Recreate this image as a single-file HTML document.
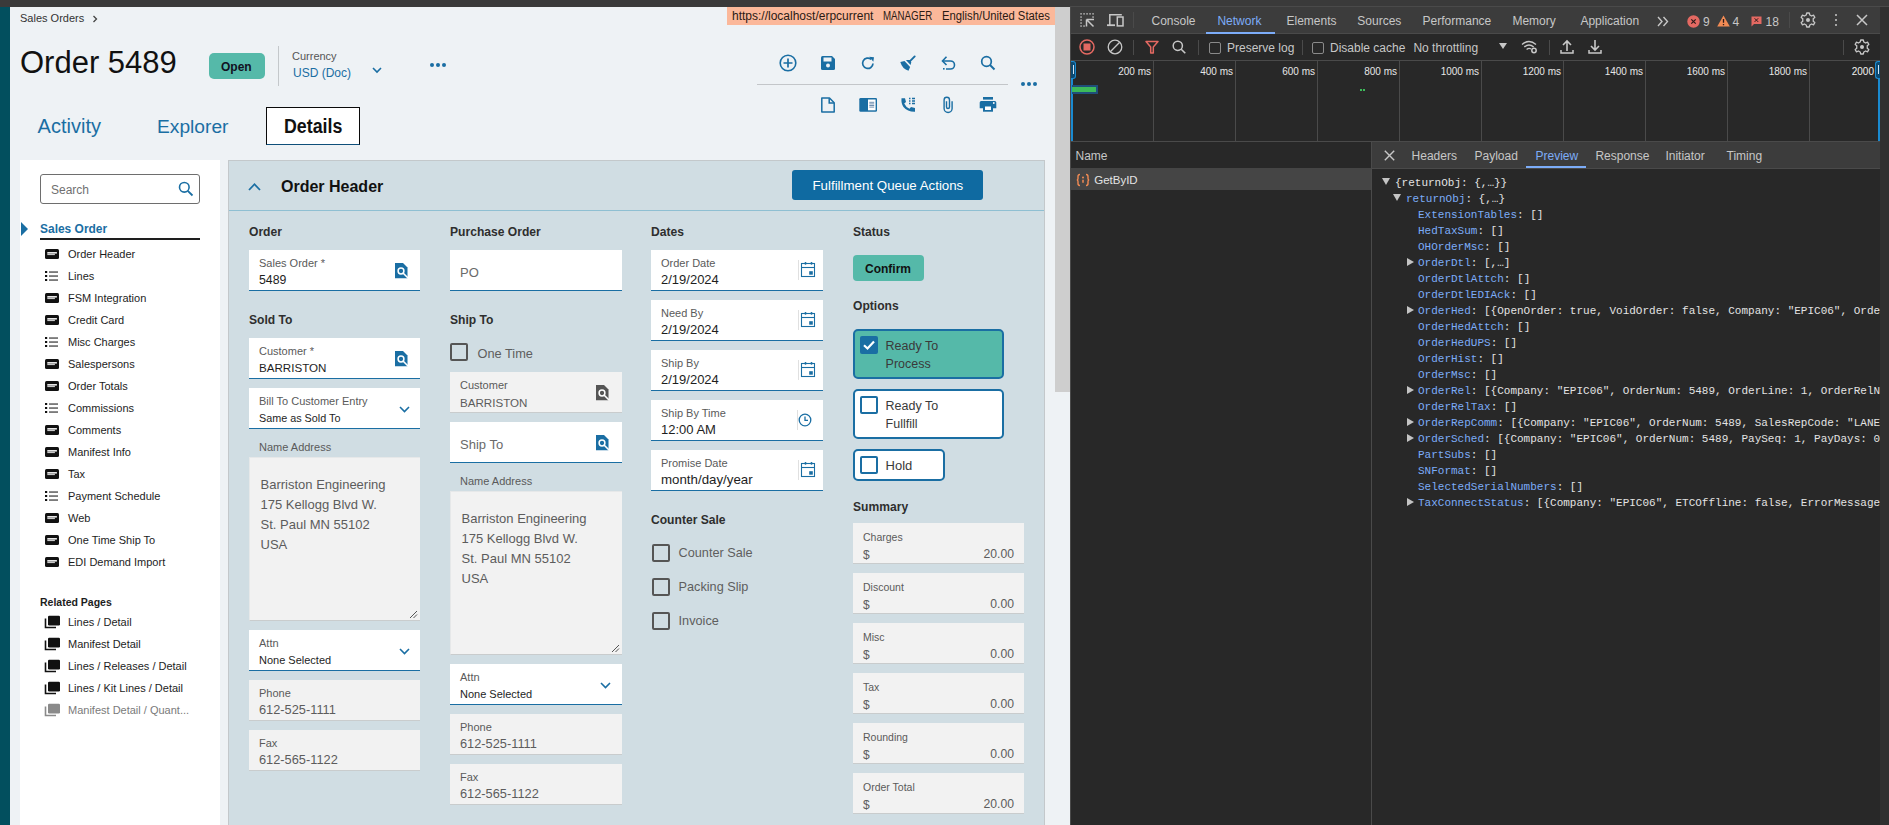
<!DOCTYPE html>
<html><head><meta charset="utf-8"><title>Order 5489</title>
<style>
html,body{margin:0;padding:0;}
body{width:1889px;height:825px;overflow:hidden;position:relative;background:#393939;font-family:"Liberation Sans", sans-serif;}
.r{position:absolute;box-sizing:border-box;}
svg.r{overflow:visible}
.t{position:absolute;line-height:1;white-space:pre;font-family:"Liberation Sans", sans-serif;}
.tm{position:absolute;line-height:1;white-space:pre;font-family:"Liberation Mono", monospace;}
</style></head><body>
<div class="r" style="left:0px;top:0px;width:1889px;height:7px;background:#3a3a3a"></div><div class="r" style="left:0px;top:7px;width:10px;height:818px;background:#024f5e"></div><div class="r" style="left:10px;top:7px;width:1060px;height:818px;background:#eef2f5"></div><div class="r" style="left:1055px;top:7px;width:15px;height:385px;background:#cecece"></div><div class="t" style="left:20px;top:12.69px;font-size:11px;color:#333;font-weight:400;">Sales Orders</div><svg class="r" style="left:92px;top:15px" width="6" height="8" viewBox="0 0 6 8"><path d="M1.5 1 L4.5 4 L1.5 7" fill="none" stroke="#444" stroke-width="1.3"/></svg><div class="r" style="left:727px;top:7px;width:328px;height:18px;background:#fbb89a"></div><div class="t" style="left:732px;top:9.84px;font-size:12px;color:#2a1a14;font-weight:400;">https://localhost/erpcurrent</div><div class="t" style="left:883px;top:9.84px;font-size:12px;color:#2a1a14;font-weight:400;transform:scaleX(0.81);transform-origin:0 0">MANAGER</div><div class="t" style="left:942px;top:9.84px;font-size:12px;color:#2a1a14;font-weight:400;transform:scaleX(0.94);transform-origin:0 0">English/United States</div><div class="t" style="left:20px;top:46.76px;font-size:31px;color:#111;font-weight:400;">Order 5489</div><div class="r" style="left:209px;top:53px;width:56px;height:26px;background:#55b9a9;border-radius:5px"></div><div class="t" style="left:221px;top:60.84px;font-size:12px;color:#112;font-weight:700;">Open</div><div class="r" style="left:278px;top:46px;width:1px;height:40px;background:#c4c8cb"></div><div class="t" style="left:292px;top:51.29px;font-size:11px;color:#555;font-weight:400;">Currency</div><div class="t" style="left:293px;top:67.44px;font-size:12px;color:#1a6ea3;font-weight:400;">USD (Doc)</div><svg class="r" style="left:372px;top:67px" width="10" height="6" viewBox="0 0 10 6"><path d="M1 1 L5 5 L9 1" fill="none" stroke="#1a6ea3" stroke-width="1.6"/></svg><div class="r" style="left:430px;top:62.5px;width:4.2px;height:4.2px;background:#1a6ea3;border-radius:50%"></div><div class="r" style="left:436px;top:62.5px;width:4.2px;height:4.2px;background:#1a6ea3;border-radius:50%"></div><div class="r" style="left:442px;top:62.5px;width:4.2px;height:4.2px;background:#1a6ea3;border-radius:50%"></div><svg class="r" style="left:779px;top:54px" width="18" height="18" viewBox="0 0 18 18"><circle cx="9" cy="9" r="7.8" fill="none" stroke="#1a6ea3" stroke-width="1.6"/><path d="M9 4.5V13.5M4.5 9H13.5" stroke="#1a6ea3" stroke-width="1.7"/></svg><svg class="r" style="left:820px;top:55px" width="16" height="16" viewBox="0 0 16 16"><path d="M1 2.5Q1 1 2.5 1H12L15 4V13.5Q15 15 13.5 15H2.5Q1 15 1 13.5Z" fill="#1a6ea3"/><rect x="3.5" y="2.5" width="8" height="4" fill="#eef2f5"/><circle cx="8" cy="10.5" r="2" fill="#eef2f5"/></svg><svg class="r" style="left:860px;top:55px" width="16" height="16" viewBox="0 0 16 16"><path d="M13 8.5A5.2 5.2 0 1 1 11.2 4.3" fill="none" stroke="#1a6ea3" stroke-width="1.7"/><path d="M9.2 1.8L14 2.2L13.3 6.8Z" fill="#1a6ea3"/></svg><svg class="r" style="left:896px;top:52px" width="24" height="22" viewBox="0 0 24 22"><path d="M18.7 4.4L14.3 8.9" stroke="#1a6ea3" stroke-width="1.9" stroke-linecap="round"/><path d="M9.9 8L13.5 8.1Q15.2 8.4 15.2 10.5L14.6 12.9Z" fill="#1a6ea3"/><path d="M4.3 10.1L8.5 9.1L14.1 14.9L12.5 18.7Q6.5 17.5 4.3 10.1Z" fill="#1a6ea3"/></svg><svg class="r" style="left:940px;top:55px" width="16" height="16" viewBox="0 0 16 16"><path d="M3 6H10.5A4 4 0 0 1 10.5 14H6" fill="none" stroke="#1a6ea3" stroke-width="1.6"/><path d="M6.5 1.8L2.5 6L6.5 10" fill="none" stroke="#1a6ea3" stroke-width="1.6"/><rect x="3" y="13" width="1.6" height="1.6" fill="#1a6ea3"/></svg><svg class="r" style="left:980px;top:55px" width="16" height="16" viewBox="0 0 16 16"><circle cx="6.5" cy="6.5" r="4.8" fill="none" stroke="#1a6ea3" stroke-width="1.7"/><path d="M10 10L14.5 14.5" stroke="#1a6ea3" stroke-width="1.9"/></svg><div class="r" style="left:757px;top:84px;width:251px;height:1.3px;background:#c3c6c9"></div><div class="r" style="left:1021px;top:81.6px;width:4.2px;height:4.2px;background:#1a6ea3;border-radius:50%"></div><div class="r" style="left:1027px;top:81.6px;width:4.2px;height:4.2px;background:#1a6ea3;border-radius:50%"></div><div class="r" style="left:1033px;top:81.6px;width:4.2px;height:4.2px;background:#1a6ea3;border-radius:50%"></div><svg class="r" style="left:820px;top:97px" width="16" height="16" viewBox="0 0 16 16"><path d="M1.8 1H9.5L14.2 5.7V15H1.8Z" fill="none" stroke="#1a6ea3" stroke-width="1.5" stroke-linejoin="round"/><path d="M9.2 1.2V6H14" fill="none" stroke="#1a6ea3" stroke-width="1.5"/></svg><svg class="r" style="left:859px;top:97px" width="18" height="16" viewBox="0 0 18 16"><rect x="0.3" y="1" width="17.7" height="13.8" rx="1.3" fill="#1a6ea3"/><rect x="9" y="2.5" width="7.6" height="10.8" fill="#fff"/><path d="M10.3 5.3H15.2M10.3 6.9H15.2M10.3 8.5H15.2M10.3 10.1H15.2" stroke="#6f8fb0" stroke-width="1"/></svg><svg class="r" style="left:900px;top:97px" width="16" height="16" viewBox="0 0 16 16"><path d="M1.5 1.2H5L6 5L4.2 6.5Q5.8 10 9.5 11.8L11 10L15 11V14.8Q7.5 15 3.5 10Q1 6.5 1.5 1.2Z" fill="#1a6ea3"/><path d="M9 1.5H10.5M9 4H10.5M9 6.5H10.5M12 1.5H15M12 4H15M12 6.5H15" stroke="#1a6ea3" stroke-width="1.4"/></svg><svg class="r" style="left:938px;top:94px" width="22" height="22" viewBox="0 0 22 22"><path d="M14.1 7.2V14.5A4 4 0 0 1 6.1 14.5V5.9A2.7 2.7 0 0 1 11.5 5.9V13A1.5 1.5 0 0 1 8.5 13V7.2" fill="none" stroke="#1a6ea3" stroke-width="1.4"/></svg><svg class="r" style="left:979px;top:96px" width="18" height="16" viewBox="0 0 18 16"><rect x="4" y="1" width="10" height="2.6" fill="#1a6ea3"/><path d="M0.7 6.5Q0.7 5 2.2 5H15.8Q17.3 5 17.3 6.5V12.3H14V9H4V12.3H0.7Z" fill="#1a6ea3"/><rect x="4" y="8.7" width="10" height="7" fill="#1a6ea3"/><rect x="6" y="10.5" width="6" height="3.5" fill="#fff"/><circle cx="14.8" cy="7" r="0.9" fill="#fff"/></svg><div class="t" style="left:37.6px;top:116.07px;font-size:20px;color:#1a6ea3;font-weight:400;">Activity</div><div class="t" style="left:157px;top:116.75px;font-size:19.2px;color:#1a6ea3;font-weight:400;">Explorer</div><div class="r" style="left:266px;top:107px;width:94px;height:38px;background:#fff;border:1.5px solid #0a0a0a;border-bottom-color:#0e4f7a"></div><div class="t" style="left:283.5px;top:116.07px;font-size:20px;color:#111;font-weight:700;transform:scaleX(0.89);transform-origin:0 0">Details</div><div class="r" style="left:20px;top:160px;width:200px;height:665px;background:#fff"></div><div class="r" style="left:40px;top:174px;width:160px;height:30px;background:#fff;border:1px solid #6e6e6e;border-radius:3px"></div><div class="t" style="left:51px;top:183.84px;font-size:12px;color:#707070;font-weight:400;">Search</div><svg class="r" style="left:178px;top:181px" width="16" height="16" viewBox="0 0 16 16"><circle cx="6.3" cy="6.3" r="4.8" fill="none" stroke="#1a6ea3" stroke-width="1.6"/><path d="M9.8 9.8L14.5 14.5" stroke="#1a6ea3" stroke-width="1.8"/></svg><svg class="r" style="left:21px;top:222px" width="7" height="14" viewBox="0 0 7 14"><path d="M0 0L7 7L0 14Z" fill="#1a6ea3"/></svg><div class="t" style="left:40px;top:222.20px;font-size:13px;color:#1a6ea3;font-weight:700;transform:scaleX(0.92);transform-origin:0 0">Sales Order</div><div class="r" style="left:40px;top:238.2px;width:160px;height:1.4px;background:#1e1e1e"></div><svg class="r" style="left:45px;top:249.2px" width="14" height="10" viewBox="0 0 14 10"><rect x="0" y="0" width="14" height="10" rx="1.5" fill="#111"/><rect x="2.3" y="3" width="9.6" height="1.6" fill="#e8e8e8"/><rect x="2.3" y="4.6" width="7.6" height="1.5" fill="#c8c8c8"/></svg><div class="t" style="left:68px;top:249.19px;font-size:11px;color:#1d1d1d;font-weight:400;">Order Header</div><svg class="r" style="left:45px;top:271.2px" width="14" height="10" viewBox="0 0 14 10"><rect x="0" y="0" width="2.2" height="2" fill="#111"/><rect x="0" y="4" width="2.2" height="2" fill="#111"/><rect x="0" y="8" width="2.2" height="2" fill="#111"/><rect x="4" y="0.4" width="9" height="1.3" fill="#444"/><rect x="4" y="4.4" width="9" height="1.3" fill="#444"/><rect x="4" y="8.4" width="9" height="1.3" fill="#444"/></svg><div class="t" style="left:68px;top:271.19px;font-size:11px;color:#1d1d1d;font-weight:400;">Lines</div><svg class="r" style="left:45px;top:293.2px" width="14" height="10" viewBox="0 0 14 10"><rect x="0" y="0" width="14" height="10" rx="1.5" fill="#111"/><rect x="2.3" y="3" width="9.6" height="1.6" fill="#e8e8e8"/><rect x="2.3" y="4.6" width="7.6" height="1.5" fill="#c8c8c8"/></svg><div class="t" style="left:68px;top:293.19px;font-size:11px;color:#1d1d1d;font-weight:400;">FSM Integration</div><svg class="r" style="left:45px;top:315.2px" width="14" height="10" viewBox="0 0 14 10"><rect x="0" y="0" width="14" height="10" rx="1.5" fill="#111"/><rect x="2.3" y="3" width="9.6" height="1.6" fill="#e8e8e8"/><rect x="2.3" y="4.6" width="7.6" height="1.5" fill="#c8c8c8"/></svg><div class="t" style="left:68px;top:315.19px;font-size:11px;color:#1d1d1d;font-weight:400;">Credit Card</div><svg class="r" style="left:45px;top:337.2px" width="14" height="10" viewBox="0 0 14 10"><rect x="0" y="0" width="2.2" height="2" fill="#111"/><rect x="0" y="4" width="2.2" height="2" fill="#111"/><rect x="0" y="8" width="2.2" height="2" fill="#111"/><rect x="4" y="0.4" width="9" height="1.3" fill="#444"/><rect x="4" y="4.4" width="9" height="1.3" fill="#444"/><rect x="4" y="8.4" width="9" height="1.3" fill="#444"/></svg><div class="t" style="left:68px;top:337.19px;font-size:11px;color:#1d1d1d;font-weight:400;">Misc Charges</div><svg class="r" style="left:45px;top:359.2px" width="14" height="10" viewBox="0 0 14 10"><rect x="0" y="0" width="14" height="10" rx="1.5" fill="#111"/><rect x="2.3" y="3" width="9.6" height="1.6" fill="#e8e8e8"/><rect x="2.3" y="4.6" width="7.6" height="1.5" fill="#c8c8c8"/></svg><div class="t" style="left:68px;top:359.19px;font-size:11px;color:#1d1d1d;font-weight:400;">Salespersons</div><svg class="r" style="left:45px;top:381.2px" width="14" height="10" viewBox="0 0 14 10"><rect x="0" y="0" width="14" height="10" rx="1.5" fill="#111"/><rect x="2.3" y="3" width="9.6" height="1.6" fill="#e8e8e8"/><rect x="2.3" y="4.6" width="7.6" height="1.5" fill="#c8c8c8"/></svg><div class="t" style="left:68px;top:381.19px;font-size:11px;color:#1d1d1d;font-weight:400;">Order Totals</div><svg class="r" style="left:45px;top:403.2px" width="14" height="10" viewBox="0 0 14 10"><rect x="0" y="0" width="2.2" height="2" fill="#111"/><rect x="0" y="4" width="2.2" height="2" fill="#111"/><rect x="0" y="8" width="2.2" height="2" fill="#111"/><rect x="4" y="0.4" width="9" height="1.3" fill="#444"/><rect x="4" y="4.4" width="9" height="1.3" fill="#444"/><rect x="4" y="8.4" width="9" height="1.3" fill="#444"/></svg><div class="t" style="left:68px;top:403.19px;font-size:11px;color:#1d1d1d;font-weight:400;">Commissions</div><svg class="r" style="left:45px;top:425.2px" width="14" height="10" viewBox="0 0 14 10"><rect x="0" y="0" width="14" height="10" rx="1.5" fill="#111"/><rect x="2.3" y="3" width="9.6" height="1.6" fill="#e8e8e8"/><rect x="2.3" y="4.6" width="7.6" height="1.5" fill="#c8c8c8"/></svg><div class="t" style="left:68px;top:425.19px;font-size:11px;color:#1d1d1d;font-weight:400;">Comments</div><svg class="r" style="left:45px;top:447.2px" width="14" height="10" viewBox="0 0 14 10"><rect x="0" y="0" width="14" height="10" rx="1.5" fill="#111"/><rect x="2.3" y="3" width="9.6" height="1.6" fill="#e8e8e8"/><rect x="2.3" y="4.6" width="7.6" height="1.5" fill="#c8c8c8"/></svg><div class="t" style="left:68px;top:447.19px;font-size:11px;color:#1d1d1d;font-weight:400;">Manifest Info</div><svg class="r" style="left:45px;top:469.2px" width="14" height="10" viewBox="0 0 14 10"><rect x="0" y="0" width="14" height="10" rx="1.5" fill="#111"/><rect x="2.3" y="3" width="9.6" height="1.6" fill="#e8e8e8"/><rect x="2.3" y="4.6" width="7.6" height="1.5" fill="#c8c8c8"/></svg><div class="t" style="left:68px;top:469.19px;font-size:11px;color:#1d1d1d;font-weight:400;">Tax</div><svg class="r" style="left:45px;top:491.2px" width="14" height="10" viewBox="0 0 14 10"><rect x="0" y="0" width="2.2" height="2" fill="#111"/><rect x="0" y="4" width="2.2" height="2" fill="#111"/><rect x="0" y="8" width="2.2" height="2" fill="#111"/><rect x="4" y="0.4" width="9" height="1.3" fill="#444"/><rect x="4" y="4.4" width="9" height="1.3" fill="#444"/><rect x="4" y="8.4" width="9" height="1.3" fill="#444"/></svg><div class="t" style="left:68px;top:491.19px;font-size:11px;color:#1d1d1d;font-weight:400;">Payment Schedule</div><svg class="r" style="left:45px;top:513.2px" width="14" height="10" viewBox="0 0 14 10"><rect x="0" y="0" width="14" height="10" rx="1.5" fill="#111"/><rect x="2.3" y="3" width="9.6" height="1.6" fill="#e8e8e8"/><rect x="2.3" y="4.6" width="7.6" height="1.5" fill="#c8c8c8"/></svg><div class="t" style="left:68px;top:513.19px;font-size:11px;color:#1d1d1d;font-weight:400;">Web</div><svg class="r" style="left:45px;top:535.2px" width="14" height="10" viewBox="0 0 14 10"><rect x="0" y="0" width="14" height="10" rx="1.5" fill="#111"/><rect x="2.3" y="3" width="9.6" height="1.6" fill="#e8e8e8"/><rect x="2.3" y="4.6" width="7.6" height="1.5" fill="#c8c8c8"/></svg><div class="t" style="left:68px;top:535.19px;font-size:11px;color:#1d1d1d;font-weight:400;">One Time Ship To</div><svg class="r" style="left:45px;top:557.2px" width="14" height="10" viewBox="0 0 14 10"><rect x="0" y="0" width="14" height="10" rx="1.5" fill="#111"/><rect x="2.3" y="3" width="9.6" height="1.6" fill="#e8e8e8"/><rect x="2.3" y="4.6" width="7.6" height="1.5" fill="#c8c8c8"/></svg><div class="t" style="left:68px;top:557.19px;font-size:11px;color:#1d1d1d;font-weight:400;">EDI Demand Import</div><div class="t" style="left:40px;top:597.11px;font-size:10.5px;color:#1d1d1d;font-weight:700;">Related Pages</div><svg class="r" style="left:44px;top:615px" width="17" height="14" viewBox="0 0 17 14"><path d="M1.5 3.5V12.5H12" fill="none" stroke="#111" stroke-width="1.6"/><rect x="4" y="0.8" width="12" height="9.7" rx="1.2" fill="#111"/></svg><div class="t" style="left:68px;top:616.69px;font-size:11px;color:#1d1d1d;font-weight:400;">Lines / Detail</div><svg class="r" style="left:44px;top:637px" width="17" height="14" viewBox="0 0 17 14"><path d="M1.5 3.5V12.5H12" fill="none" stroke="#111" stroke-width="1.6"/><rect x="4" y="0.8" width="12" height="9.7" rx="1.2" fill="#111"/></svg><div class="t" style="left:68px;top:638.69px;font-size:11px;color:#1d1d1d;font-weight:400;">Manifest Detail</div><svg class="r" style="left:44px;top:659px" width="17" height="14" viewBox="0 0 17 14"><path d="M1.5 3.5V12.5H12" fill="none" stroke="#111" stroke-width="1.6"/><rect x="4" y="0.8" width="12" height="9.7" rx="1.2" fill="#111"/></svg><div class="t" style="left:68px;top:660.69px;font-size:11px;color:#1d1d1d;font-weight:400;">Lines / Releases / Detail</div><svg class="r" style="left:44px;top:681px" width="17" height="14" viewBox="0 0 17 14"><path d="M1.5 3.5V12.5H12" fill="none" stroke="#111" stroke-width="1.6"/><rect x="4" y="0.8" width="12" height="9.7" rx="1.2" fill="#111"/></svg><div class="t" style="left:68px;top:682.69px;font-size:11px;color:#1d1d1d;font-weight:400;">Lines / Kit Lines / Detail</div><svg class="r" style="left:44px;top:703px" width="17" height="14" viewBox="0 0 17 14"><path d="M1.5 3.5V12.5H12" fill="none" stroke="#8a8a8a" stroke-width="1.6"/><rect x="4" y="0.8" width="12" height="9.7" rx="1.2" fill="#8a8a8a"/></svg><div class="t" style="left:68px;top:704.69px;font-size:11px;color:#7a7a7a;font-weight:400;">Manifest Detail / Quant...</div><div class="r" style="left:228px;top:160px;width:817px;height:665px;background:#d0dde3;border-left:1px solid #c3c8cb;border-top:1px solid #c3c8cb;border-right:1px solid #c3c8cb"></div><div class="r" style="left:229px;top:210px;width:815px;height:1px;background:#8fbfd2"></div><svg class="r" style="left:248px;top:182px" width="13" height="9" viewBox="0 0 13 9"><path d="M1 8L6.5 2.2L12 8" fill="none" stroke="#1a6ea3" stroke-width="1.8"/></svg><div class="t" style="left:281px;top:179.46px;font-size:16px;color:#111;font-weight:700;">Order Header</div><div class="r" style="left:792px;top:170px;width:191px;height:30px;background:#0f6aa1;border-radius:3px"></div><div class="t" style="left:812.5px;top:179.24px;font-size:13.3px;color:#fff;font-weight:400;">Fulfillment Queue Actions</div><div class="t" style="left:249px;top:224.80px;font-size:13px;color:#2e2e2e;font-weight:700;transform:scaleX(0.93);transform-origin:0 0">Order</div><div class="r" style="left:249px;top:250px;width:171px;height:39.5px;background:#fff"></div><div class="r" style="left:249px;top:289.5px;width:171px;height:1.5px;background:#1a6ea3"></div><div class="t" style="left:259px;top:257.69px;font-size:11px;color:#5a5a5a;font-weight:400;">Sales Order *</div><div class="t" style="left:259px;top:273.59px;font-size:12.3px;color:#1e1e1e;font-weight:400;">5489</div><svg class="r" style="left:394.5px;top:262.5px" width="13" height="15.5" viewBox="0 0 13 15.5"><path d="M0 0H8L12.5 4.5V15.2H0Z" fill="#1a6ea3"/><circle cx="6" cy="8" r="2.9" fill="none" stroke="#fff" stroke-width="1.5"/><path d="M8 10L13 15" stroke="#fff" stroke-width="1.6"/></svg><div class="t" style="left:249px;top:312.80px;font-size:13px;color:#2e2e2e;font-weight:700;transform:scaleX(0.93);transform-origin:0 0">Sold To</div><div class="r" style="left:249px;top:338px;width:171px;height:39.5px;background:#fff"></div><div class="r" style="left:249px;top:377.5px;width:171px;height:1.5px;background:#1a6ea3"></div><div class="t" style="left:259px;top:345.69px;font-size:11px;color:#5a5a5a;font-weight:400;">Customer *</div><div class="t" style="left:259px;top:362.18px;font-size:11.6px;color:#1e1e1e;font-weight:400;">BARRISTON</div><svg class="r" style="left:394.5px;top:350.5px" width="13" height="15.5" viewBox="0 0 13 15.5"><path d="M0 0H8L12.5 4.5V15.2H0Z" fill="#1a6ea3"/><circle cx="6" cy="8" r="2.9" fill="none" stroke="#fff" stroke-width="1.5"/><path d="M8 10L13 15" stroke="#fff" stroke-width="1.6"/></svg><div class="r" style="left:249px;top:388px;width:171px;height:39.5px;background:#fff"></div><div class="r" style="left:249px;top:427.5px;width:171px;height:1.5px;background:#1a6ea3"></div><div class="t" style="left:259px;top:395.69px;font-size:11px;color:#5a5a5a;font-weight:400;">Bill To Customer Entry</div><div class="t" style="left:259px;top:412.86px;font-size:10.8px;color:#1e1e1e;font-weight:400;">Same as Sold To</div><svg class="r" style="left:399px;top:406px" width="11" height="7" viewBox="0 0 11 7"><path d="M1 1L5.5 5.5L10 1" fill="none" stroke="#1a6ea3" stroke-width="1.6"/></svg><div class="t" style="left:259px;top:441.69px;font-size:11px;color:#5a5a5a;font-weight:400;">Name Address</div><div class="r" style="left:249px;top:457px;width:171px;height:164px;background:#f2f2f2;border-top:1px solid #e6e8e9;border-left:1px solid #e6e8e9;border-bottom:1px solid #c9cccd"></div><div class="t" style="left:260.5px;top:477.80px;font-size:13px;color:#5c5c5c;font-weight:400;">Barriston Engineering</div><div class="t" style="left:260.5px;top:497.80px;font-size:13px;color:#5c5c5c;font-weight:400;">175 Kellogg Blvd W.</div><div class="t" style="left:260.5px;top:517.80px;font-size:13px;color:#5c5c5c;font-weight:400;">St. Paul MN 55102</div><div class="t" style="left:260.5px;top:537.80px;font-size:13px;color:#5c5c5c;font-weight:400;">USA</div><svg class="r" style="left:409px;top:610px" width="9" height="9" viewBox="0 0 9 9"><path d="M8 1L1 8M8 4.5L4.5 8" stroke="#555" stroke-width="1"/></svg><div class="r" style="left:249px;top:630px;width:171px;height:39.5px;background:#fff"></div><div class="r" style="left:249px;top:669.5px;width:171px;height:1.5px;background:#1a6ea3"></div><div class="t" style="left:259px;top:637.69px;font-size:11px;color:#5a5a5a;font-weight:400;">Attn</div><div class="t" style="left:259px;top:654.69px;font-size:11px;color:#1e1e1e;font-weight:400;">None Selected</div><svg class="r" style="left:399px;top:648px" width="11" height="7" viewBox="0 0 11 7"><path d="M1 1L5.5 5.5L10 1" fill="none" stroke="#1a6ea3" stroke-width="1.6"/></svg><div class="r" style="left:249px;top:680px;width:171px;height:41px;background:#f2f2f2;border-bottom:1px solid #c9cccd"></div><div class="t" style="left:259px;top:687.69px;font-size:11px;color:#5a5a5a;font-weight:400;">Phone</div><div class="t" style="left:259px;top:703.96px;font-size:12.8px;color:#5c5c5c;font-weight:400;">612-525-1111</div><div class="r" style="left:249px;top:730px;width:171px;height:41px;background:#f2f2f2;border-bottom:1px solid #c9cccd"></div><div class="t" style="left:259px;top:737.69px;font-size:11px;color:#5a5a5a;font-weight:400;">Fax</div><div class="t" style="left:259px;top:753.96px;font-size:12.8px;color:#5c5c5c;font-weight:400;">612-565-1122</div><div class="t" style="left:450px;top:224.80px;font-size:13px;color:#2e2e2e;font-weight:700;transform:scaleX(0.93);transform-origin:0 0">Purchase Order</div><div class="r" style="left:450px;top:250px;width:172px;height:39.5px;background:#fff"></div><div class="r" style="left:450px;top:289.5px;width:172px;height:1.5px;background:#1a6ea3"></div><div class="t" style="left:460px;top:265.50px;font-size:13px;color:#6a6a6a;font-weight:400;">PO</div><div class="t" style="left:450px;top:312.80px;font-size:13px;color:#2e2e2e;font-weight:700;transform:scaleX(0.93);transform-origin:0 0">Ship To</div><div class="r" style="left:450px;top:343px;width:18px;height:18px;border:2px solid #555;border-radius:2px"></div><div class="t" style="left:477.5px;top:347.66px;font-size:12.8px;color:#5e5e5e;font-weight:400;">One Time</div><div class="r" style="left:450px;top:372px;width:172px;height:41px;background:#f2f2f2;border-bottom:1px solid #c9cccd"></div><div class="t" style="left:460px;top:379.69px;font-size:11px;color:#5a5a5a;font-weight:400;">Customer</div><div class="t" style="left:460px;top:396.98px;font-size:11.6px;color:#5c5c5c;font-weight:400;">BARRISTON</div><svg class="r" style="left:595.5px;top:384.5px" width="13" height="15.5" viewBox="0 0 13 15.5"><path d="M0 0H8L12.5 4.5V15.2H0Z" fill="#555"/><circle cx="6" cy="8" r="2.9" fill="none" stroke="#fff" stroke-width="1.5"/><path d="M8 10L13 15" stroke="#fff" stroke-width="1.6"/></svg><div class="r" style="left:450px;top:422px;width:172px;height:39.5px;background:#fff"></div><div class="r" style="left:450px;top:461.5px;width:172px;height:1.5px;background:#1a6ea3"></div><div class="t" style="left:460px;top:438.00px;font-size:13px;color:#6a6a6a;font-weight:400;">Ship To</div><svg class="r" style="left:595.5px;top:434.5px" width="13" height="15.5" viewBox="0 0 13 15.5"><path d="M0 0H8L12.5 4.5V15.2H0Z" fill="#1a6ea3"/><circle cx="6" cy="8" r="2.9" fill="none" stroke="#fff" stroke-width="1.5"/><path d="M8 10L13 15" stroke="#fff" stroke-width="1.6"/></svg><div class="t" style="left:460px;top:475.69px;font-size:11px;color:#5a5a5a;font-weight:400;">Name Address</div><div class="r" style="left:450px;top:491px;width:172px;height:164px;background:#f2f2f2;border-top:1px solid #e6e8e9;border-left:1px solid #e6e8e9;border-bottom:1px solid #c9cccd"></div><div class="t" style="left:461.5px;top:511.80px;font-size:13px;color:#5c5c5c;font-weight:400;">Barriston Engineering</div><div class="t" style="left:461.5px;top:531.80px;font-size:13px;color:#5c5c5c;font-weight:400;">175 Kellogg Blvd W.</div><div class="t" style="left:461.5px;top:551.80px;font-size:13px;color:#5c5c5c;font-weight:400;">St. Paul MN 55102</div><div class="t" style="left:461.5px;top:571.80px;font-size:13px;color:#5c5c5c;font-weight:400;">USA</div><svg class="r" style="left:611px;top:644px" width="9" height="9" viewBox="0 0 9 9"><path d="M8 1L1 8M8 4.5L4.5 8" stroke="#555" stroke-width="1"/></svg><div class="r" style="left:450px;top:664px;width:172px;height:39.5px;background:#fff"></div><div class="r" style="left:450px;top:703.5px;width:172px;height:1.5px;background:#1a6ea3"></div><div class="t" style="left:460px;top:671.69px;font-size:11px;color:#5a5a5a;font-weight:400;">Attn</div><div class="t" style="left:460px;top:688.69px;font-size:11px;color:#1e1e1e;font-weight:400;">None Selected</div><svg class="r" style="left:600px;top:682px" width="11" height="7" viewBox="0 0 11 7"><path d="M1 1L5.5 5.5L10 1" fill="none" stroke="#1a6ea3" stroke-width="1.6"/></svg><div class="r" style="left:450px;top:714px;width:172px;height:41px;background:#f2f2f2;border-bottom:1px solid #c9cccd"></div><div class="t" style="left:460px;top:721.69px;font-size:11px;color:#5a5a5a;font-weight:400;">Phone</div><div class="t" style="left:460px;top:737.96px;font-size:12.8px;color:#5c5c5c;font-weight:400;">612-525-1111</div><div class="r" style="left:450px;top:764px;width:172px;height:41px;background:#f2f2f2;border-bottom:1px solid #c9cccd"></div><div class="t" style="left:460px;top:771.69px;font-size:11px;color:#5a5a5a;font-weight:400;">Fax</div><div class="t" style="left:460px;top:787.96px;font-size:12.8px;color:#5c5c5c;font-weight:400;">612-565-1122</div><div class="t" style="left:651px;top:224.80px;font-size:13px;color:#2e2e2e;font-weight:700;transform:scaleX(0.93);transform-origin:0 0">Dates</div><div class="r" style="left:651px;top:250px;width:172px;height:39.5px;background:#fff"></div><div class="r" style="left:651px;top:289.5px;width:172px;height:1.5px;background:#1a6ea3"></div><div class="t" style="left:661px;top:257.69px;font-size:11px;color:#5a5a5a;font-weight:400;">Order Date</div><div class="t" style="left:661px;top:273.00px;font-size:13px;color:#1e1e1e;font-weight:400;">2/19/2024</div><div class="r" style="left:798px;top:260px;width:1px;height:20px;background:#e0e0e0"></div><svg class="r" style="left:801px;top:262px" width="15" height="15" viewBox="0 0 15 15"><rect x="0.5" y="1.5" width="13" height="13" fill="none" stroke="#1a6ea3" stroke-width="1.1"/><path d="M0.5 5.5H13.5" stroke="#1a6ea3" stroke-width="1.1"/><rect x="3.6" y="0" width="1.8" height="2.8" rx="0.8" fill="#1a6ea3"/><rect x="9.6" y="0" width="1.8" height="2.8" rx="0.8" fill="#1a6ea3"/><rect x="8.2" y="9.2" width="3.6" height="3.5" fill="#1a6ea3"/></svg><div class="r" style="left:651px;top:300px;width:172px;height:39.5px;background:#fff"></div><div class="r" style="left:651px;top:339.5px;width:172px;height:1.5px;background:#1a6ea3"></div><div class="t" style="left:661px;top:307.69px;font-size:11px;color:#5a5a5a;font-weight:400;">Need By</div><div class="t" style="left:661px;top:323.00px;font-size:13px;color:#1e1e1e;font-weight:400;">2/19/2024</div><div class="r" style="left:798px;top:310px;width:1px;height:20px;background:#e0e0e0"></div><svg class="r" style="left:801px;top:312px" width="15" height="15" viewBox="0 0 15 15"><rect x="0.5" y="1.5" width="13" height="13" fill="none" stroke="#1a6ea3" stroke-width="1.1"/><path d="M0.5 5.5H13.5" stroke="#1a6ea3" stroke-width="1.1"/><rect x="3.6" y="0" width="1.8" height="2.8" rx="0.8" fill="#1a6ea3"/><rect x="9.6" y="0" width="1.8" height="2.8" rx="0.8" fill="#1a6ea3"/><rect x="8.2" y="9.2" width="3.6" height="3.5" fill="#1a6ea3"/></svg><div class="r" style="left:651px;top:350px;width:172px;height:39.5px;background:#fff"></div><div class="r" style="left:651px;top:389.5px;width:172px;height:1.5px;background:#1a6ea3"></div><div class="t" style="left:661px;top:357.69px;font-size:11px;color:#5a5a5a;font-weight:400;">Ship By</div><div class="t" style="left:661px;top:373.00px;font-size:13px;color:#1e1e1e;font-weight:400;">2/19/2024</div><div class="r" style="left:798px;top:360px;width:1px;height:20px;background:#e0e0e0"></div><svg class="r" style="left:801px;top:362px" width="15" height="15" viewBox="0 0 15 15"><rect x="0.5" y="1.5" width="13" height="13" fill="none" stroke="#1a6ea3" stroke-width="1.1"/><path d="M0.5 5.5H13.5" stroke="#1a6ea3" stroke-width="1.1"/><rect x="3.6" y="0" width="1.8" height="2.8" rx="0.8" fill="#1a6ea3"/><rect x="9.6" y="0" width="1.8" height="2.8" rx="0.8" fill="#1a6ea3"/><rect x="8.2" y="9.2" width="3.6" height="3.5" fill="#1a6ea3"/></svg><div class="r" style="left:651px;top:400px;width:172px;height:39.5px;background:#fff"></div><div class="r" style="left:651px;top:439.5px;width:172px;height:1.5px;background:#1a6ea3"></div><div class="t" style="left:661px;top:407.69px;font-size:11px;color:#5a5a5a;font-weight:400;">Ship By Time</div><div class="t" style="left:661px;top:423.00px;font-size:13px;color:#1e1e1e;font-weight:400;">12:00 AM</div><div class="r" style="left:797px;top:410px;width:1px;height:20px;background:#e0e0e0"></div><svg class="r" style="left:798px;top:413px" width="14" height="14" viewBox="0 0 14 14"><circle cx="7" cy="7" r="5.8" fill="none" stroke="#1a6ea3" stroke-width="1.3"/><path d="M7 3.5V7.3H10" fill="none" stroke="#1a6ea3" stroke-width="1.3"/></svg><div class="r" style="left:651px;top:450px;width:172px;height:39.5px;background:#fff"></div><div class="r" style="left:651px;top:489.5px;width:172px;height:1.5px;background:#1a6ea3"></div><div class="t" style="left:661px;top:457.69px;font-size:11px;color:#5a5a5a;font-weight:400;">Promise Date</div><div class="t" style="left:661px;top:472.74px;font-size:13.3px;color:#1e1e1e;font-weight:400;">month/day/year</div><div class="r" style="left:798px;top:460px;width:1px;height:20px;background:#e0e0e0"></div><svg class="r" style="left:801px;top:462px" width="15" height="15" viewBox="0 0 15 15"><rect x="0.5" y="1.5" width="13" height="13" fill="none" stroke="#1a6ea3" stroke-width="1.1"/><path d="M0.5 5.5H13.5" stroke="#1a6ea3" stroke-width="1.1"/><rect x="3.6" y="0" width="1.8" height="2.8" rx="0.8" fill="#1a6ea3"/><rect x="9.6" y="0" width="1.8" height="2.8" rx="0.8" fill="#1a6ea3"/><rect x="8.2" y="9.2" width="3.6" height="3.5" fill="#1a6ea3"/></svg><div class="t" style="left:651px;top:513.20px;font-size:13px;color:#2e2e2e;font-weight:700;transform:scaleX(0.93);transform-origin:0 0">Counter Sale</div><div class="r" style="left:652px;top:543.5px;width:18px;height:18px;border:2px solid #555;border-radius:2px"></div><div class="t" style="left:678.6px;top:547.05px;font-size:12.7px;color:#5e5e5e;font-weight:400;">Counter Sale</div><div class="r" style="left:652px;top:577.5px;width:18px;height:18px;border:2px solid #555;border-radius:2px"></div><div class="t" style="left:678.6px;top:581.05px;font-size:12.7px;color:#5e5e5e;font-weight:400;">Packing Slip</div><div class="r" style="left:652px;top:611.5px;width:18px;height:18px;border:2px solid #555;border-radius:2px"></div><div class="t" style="left:678.6px;top:615.05px;font-size:12.7px;color:#5e5e5e;font-weight:400;">Invoice</div><div class="t" style="left:853px;top:224.80px;font-size:13px;color:#2e2e2e;font-weight:700;transform:scaleX(0.93);transform-origin:0 0">Status</div><div class="r" style="left:853px;top:255px;width:71px;height:26px;background:#55b9a9;border-radius:4px"></div><div class="t" style="left:865px;top:262.84px;font-size:12px;color:#111;font-weight:700;">Confirm</div><div class="t" style="left:853px;top:299.00px;font-size:13px;color:#2e2e2e;font-weight:700;transform:scaleX(0.93);transform-origin:0 0">Options</div><div class="r" style="left:853px;top:329px;width:151px;height:50px;background:#55b9a9;border:2px solid #1a6ea3;border-radius:5px"></div><div class="r" style="left:860px;top:336px;width:18px;height:18px;background:#1a6ea3;border-radius:2px"></div><svg class="r" style="left:860px;top:336px" width="18" height="18" viewBox="0 0 18 18"><path d="M4 9.3L7.5 12.5L14 5.5" fill="none" stroke="#fff" stroke-width="2.2"/></svg><div class="t" style="left:885.6px;top:340.42px;font-size:12.5px;color:#3a3a3a;font-weight:400;">Ready To</div><div class="t" style="left:885.6px;top:358.42px;font-size:12.5px;color:#3a3a3a;font-weight:400;">Process</div><div class="r" style="left:853px;top:389px;width:151px;height:49.5px;background:#fff;border:2px solid #1a6ea3;border-radius:5px"></div><div class="r" style="left:860px;top:396px;width:18px;height:18px;border:2px solid #1a6ea3;border-radius:2px"></div><div class="t" style="left:885.6px;top:400.42px;font-size:12.5px;color:#3a3a3a;font-weight:400;">Ready To</div><div class="t" style="left:885.6px;top:418.42px;font-size:12.5px;color:#3a3a3a;font-weight:400;">Fullfill</div><div class="r" style="left:853px;top:449px;width:92px;height:32px;background:#fff;border:2px solid #1a6ea3;border-radius:5px"></div><div class="r" style="left:860px;top:456px;width:18px;height:18px;border:2px solid #1a6ea3;border-radius:2px"></div><div class="t" style="left:885.6px;top:459.30px;font-size:13px;color:#3a3a3a;font-weight:400;">Hold</div><div class="t" style="left:853px;top:500.00px;font-size:13px;color:#2e2e2e;font-weight:700;transform:scaleX(0.93);transform-origin:0 0">Summary</div><div class="r" style="left:853px;top:523px;width:171px;height:41px;background:#f2f2f2;border-bottom:1px solid #c9cccd"></div><div class="t" style="left:863px;top:531.61px;font-size:10.5px;color:#5a5a5a;font-weight:400;">Charges</div><div class="t" style="left:863px;top:548.64px;font-size:12px;color:#5c5c5c;font-weight:400;">$</div><div class="t" style="right:875px;top:548.47px;font-size:12.2px;color:#5c5c5c;font-weight:400;">20.00</div><div class="r" style="left:853px;top:573px;width:171px;height:41px;background:#f2f2f2;border-bottom:1px solid #c9cccd"></div><div class="t" style="left:863px;top:581.61px;font-size:10.5px;color:#5a5a5a;font-weight:400;">Discount</div><div class="t" style="left:863px;top:598.64px;font-size:12px;color:#5c5c5c;font-weight:400;">$</div><div class="t" style="right:875px;top:598.47px;font-size:12.2px;color:#5c5c5c;font-weight:400;">0.00</div><div class="r" style="left:853px;top:623px;width:171px;height:41px;background:#f2f2f2;border-bottom:1px solid #c9cccd"></div><div class="t" style="left:863px;top:631.61px;font-size:10.5px;color:#5a5a5a;font-weight:400;">Misc</div><div class="t" style="left:863px;top:648.64px;font-size:12px;color:#5c5c5c;font-weight:400;">$</div><div class="t" style="right:875px;top:648.47px;font-size:12.2px;color:#5c5c5c;font-weight:400;">0.00</div><div class="r" style="left:853px;top:673px;width:171px;height:41px;background:#f2f2f2;border-bottom:1px solid #c9cccd"></div><div class="t" style="left:863px;top:681.61px;font-size:10.5px;color:#5a5a5a;font-weight:400;">Tax</div><div class="t" style="left:863px;top:698.64px;font-size:12px;color:#5c5c5c;font-weight:400;">$</div><div class="t" style="right:875px;top:698.47px;font-size:12.2px;color:#5c5c5c;font-weight:400;">0.00</div><div class="r" style="left:853px;top:723px;width:171px;height:41px;background:#f2f2f2;border-bottom:1px solid #c9cccd"></div><div class="t" style="left:863px;top:731.61px;font-size:10.5px;color:#5a5a5a;font-weight:400;">Rounding</div><div class="t" style="left:863px;top:748.64px;font-size:12px;color:#5c5c5c;font-weight:400;">$</div><div class="t" style="right:875px;top:748.47px;font-size:12.2px;color:#5c5c5c;font-weight:400;">0.00</div><div class="r" style="left:853px;top:773px;width:171px;height:41px;background:#f2f2f2;border-bottom:1px solid #c9cccd"></div><div class="t" style="left:863px;top:781.61px;font-size:10.5px;color:#5a5a5a;font-weight:400;">Order Total</div><div class="t" style="left:863px;top:798.64px;font-size:12px;color:#5c5c5c;font-weight:400;">$</div><div class="t" style="right:875px;top:798.47px;font-size:12.2px;color:#5c5c5c;font-weight:400;">20.00</div><div class="r" style="left:1070px;top:7px;width:819px;height:818px;background:#282828"></div><div class="r" style="left:1070px;top:7px;width:810px;height:27px;background:#3c3c3c;border-bottom:1px solid #4a4a4a"></div><div class="r" style="left:1880px;top:7px;width:9px;height:818px;background:#303030"></div><div class="r" style="left:1070px;top:7px;width:1px;height:818px;background:#4a4a4a"></div><div class="r" style="left:1070px;top:6px;width:819px;height:1px;background:#4a4a4a"></div><div class="r" style="left:1070px;top:60px;width:810px;height:1px;background:#4a4a4a"></div><div class="r" style="left:1070px;top:141px;width:810px;height:1px;background:#4a4a4a"></div><svg class="r" style="left:1078px;top:11px" width="18" height="18" viewBox="0 0 18 18"><rect x="2.35" y="2.15" width="1.4" height="1.4" fill="#c7c7c7"/><rect x="5.35" y="2.15" width="1.4" height="1.4" fill="#c7c7c7"/><rect x="8.35" y="2.15" width="1.4" height="1.4" fill="#c7c7c7"/><rect x="11.35" y="2.15" width="1.4" height="1.4" fill="#c7c7c7"/><rect x="14.35" y="2.15" width="1.4" height="1.4" fill="#c7c7c7"/><rect x="2.35" y="5.35" width="1.4" height="1.4" fill="#c7c7c7"/><rect x="2.35" y="8.35" width="1.4" height="1.4" fill="#c7c7c7"/><rect x="2.35" y="11.35" width="1.4" height="1.4" fill="#c7c7c7"/><rect x="2.35" y="14.35" width="1.4" height="1.4" fill="#c7c7c7"/><rect x="5.35" y="14.35" width="1.4" height="1.4" fill="#c7c7c7"/><rect x="14.35" y="5.35" width="1.4" height="1.4" fill="#c7c7c7"/><path d="M8.5 8.5H16M8.5 8.5V15.5M8.5 8.5L15.5 15.5" fill="none" stroke="#c7c7c7" stroke-width="1.5"/></svg><svg class="r" style="left:1105px;top:11px" width="20" height="18" viewBox="0 0 20 18"><path d="M4.8 14.3V3.7H16.8" fill="none" stroke="#c7c7c7" stroke-width="1.5"/><path d="M2 14.2H10" stroke="#c7c7c7" stroke-width="1.8"/><rect x="12.3" y="6" width="5.7" height="8.9" fill="none" stroke="#c7c7c7" stroke-width="1.5"/></svg><div class="r" style="left:1133px;top:12px;width:1px;height:16px;background:#4a4a4a"></div><div class="t" style="left:1151.5px;top:15.04px;font-size:12px;color:#c7c7c7;font-weight:400;">Console</div><div class="t" style="left:1217.4px;top:15.04px;font-size:12px;color:#7cacf8;font-weight:400;">Network</div><div class="t" style="left:1286.5px;top:15.04px;font-size:12px;color:#c7c7c7;font-weight:400;">Elements</div><div class="t" style="left:1357.3px;top:15.04px;font-size:12px;color:#c7c7c7;font-weight:400;">Sources</div><div class="t" style="left:1422.6px;top:15.04px;font-size:12px;color:#c7c7c7;font-weight:400;">Performance</div><div class="t" style="left:1512.4px;top:15.04px;font-size:12px;color:#c7c7c7;font-weight:400;">Memory</div><div class="t" style="left:1580.4px;top:15.04px;font-size:12px;color:#c7c7c7;font-weight:400;">Application</div><div class="r" style="left:1206px;top:32px;width:69px;height:2px;background:#7cacf8"></div><svg class="r" style="left:1657px;top:15.5px" width="12" height="11" viewBox="0 0 12 11"><path d="M1 1L5 5.5L1 10M6.5 1L10.5 5.5L6.5 10" fill="none" stroke="#c7c7c7" stroke-width="1.4"/></svg><svg class="r" style="left:1686.5px;top:14.8px" width="13" height="13" viewBox="0 0 13 13"><circle cx="6.5" cy="6.5" r="6.2" fill="#e46962"/><path d="M4.3 4.3L8.7 8.7M8.7 4.3L4.3 8.7" stroke="#2a1a1a" stroke-width="1.2"/></svg><div class="t" style="left:1703px;top:16.14px;font-size:12px;color:#c7c7c7;font-weight:400;">9</div><svg class="r" style="left:1716.5px;top:15px" width="13" height="12" viewBox="0 0 13 12"><path d="M6.5 0.5L12.8 11.5H0.2Z" fill="#f28b54"/><path d="M6.5 4V7.8M6.5 9V10.3" stroke="#2a1a1a" stroke-width="1.3"/></svg><div class="t" style="left:1732.4px;top:16.14px;font-size:12px;color:#c7c7c7;font-weight:400;">4</div><svg class="r" style="left:1751px;top:16px" width="11" height="11" viewBox="0 0 11 11"><path d="M0.5 0.5H10.5V8H3L0.5 10.5Z" fill="#e46962"/><path d="M3.6 2.3L7.2 5.9M7.2 2.3L3.6 5.9" stroke="#2a1a1a" stroke-width="1"/></svg><div class="t" style="left:1765.6px;top:16.44px;font-size:12px;color:#c7c7c7;font-weight:400;">18</div><div class="r" style="left:1789px;top:12px;width:1px;height:16px;background:#4a4a4a"></div><svg class="r" style="left:1800px;top:12px" width="16" height="16" viewBox="0 0 16 16"><g transform="translate(8,8)"><path d="M-1.3 -7H1.3L1.8 -5Q2.8 -4.6 3.6 -4L5.5 -4.8L6.8 -2.6L5.2 -1.3Q5.4 0 5.2 1.3L6.8 2.6L5.5 4.8L3.6 4Q2.8 4.6 1.8 5L1.3 7H-1.3L-1.8 5Q-2.8 4.6 -3.6 4L-5.5 4.8L-6.8 2.6L-5.2 1.3Q-5.4 0 -5.2 -1.3L-6.8 -2.6L-5.5 -4.8L-3.6 -4Q-2.8 -4.6 -1.8 -5Z" fill="none" stroke="#c7c7c7" stroke-width="1.3" stroke-linejoin="round"/><circle r="2" fill="#c7c7c7"/></g></svg><div class="r" style="left:1834.8px;top:13.8px;width:2.5px;height:2.5px;background:#c7c7c7;border-radius:50%"></div><div class="r" style="left:1834.8px;top:18.8px;width:2.5px;height:2.5px;background:#c7c7c7;border-radius:50%"></div><div class="r" style="left:1834.8px;top:23.8px;width:2.5px;height:2.5px;background:#c7c7c7;border-radius:50%"></div><svg class="r" style="left:1856px;top:14.3px" width="12" height="12" viewBox="0 0 12 12"><path d="M1 1L11 11M11 1L1 11" stroke="#c7c7c7" stroke-width="1.5"/></svg><svg class="r" style="left:1079px;top:39px" width="16" height="16" viewBox="0 0 16 16"><circle cx="8" cy="8" r="7" fill="none" stroke="#e46962" stroke-width="1.5"/><rect x="4.5" y="4.5" width="7" height="7" fill="#e46962"/></svg><svg class="r" style="left:1107px;top:39px" width="16" height="16" viewBox="0 0 16 16"><circle cx="8" cy="8" r="6.8" fill="none" stroke="#c7c7c7" stroke-width="1.3"/><path d="M3.3 12.7L12.7 3.3" stroke="#c7c7c7" stroke-width="1.3"/></svg><div class="r" style="left:1133px;top:40px;width:1px;height:15px;background:#4a4a4a"></div><svg class="r" style="left:1145px;top:40px" width="14" height="14" viewBox="0 0 14 14"><path d="M1 1.5H13L8.3 7V13H5.7V7Z" fill="none" stroke="#e46962" stroke-width="1.5" stroke-linejoin="round"/></svg><svg class="r" style="left:1172px;top:40px" width="14" height="14" viewBox="0 0 14 14"><circle cx="5.8" cy="5.8" r="4.6" fill="none" stroke="#c7c7c7" stroke-width="1.5"/><path d="M9.2 9.2L13.3 13.3" stroke="#c7c7c7" stroke-width="1.6"/></svg><div class="r" style="left:1198px;top:40px;width:1px;height:15px;background:#4a4a4a"></div><div class="r" style="left:1209px;top:41.5px;width:12px;height:12px;border:1px solid #8a8a8a;border-radius:2px"></div><div class="t" style="left:1227px;top:41.94px;font-size:12px;color:#c7c7c7;font-weight:400;">Preserve log</div><div class="r" style="left:1301.5px;top:40px;width:1px;height:15px;background:#4a4a4a"></div><div class="r" style="left:1312px;top:41.5px;width:12px;height:12px;border:1px solid #8a8a8a;border-radius:2px"></div><div class="t" style="left:1330px;top:41.94px;font-size:12px;color:#c7c7c7;font-weight:400;">Disable cache</div><div class="t" style="left:1413.4px;top:41.94px;font-size:12px;color:#c7c7c7;font-weight:400;">No throttling</div><svg class="r" style="left:1499px;top:43px" width="8" height="6" viewBox="0 0 8 6"><path d="M0 0H8L4 6Z" fill="#c7c7c7"/></svg><svg class="r" style="left:1521px;top:39px" width="18" height="15" viewBox="0 0 18 15"><path d="M1 5.5Q8 -0.5 15 5.5M3.3 8Q8 4 12.7 8M5.6 10.5Q8 8.5 10 10" fill="none" stroke="#c7c7c7" stroke-width="1.3"/><circle cx="13" cy="11.5" r="2.2" fill="none" stroke="#c7c7c7" stroke-width="1.5"/></svg><div class="r" style="left:1548.5px;top:40px;width:1px;height:15px;background:#4a4a4a"></div><svg class="r" style="left:1560px;top:39px" width="14" height="15" viewBox="0 0 14 15"><path d="M7 12V2M3 6L7 2L11 6" fill="none" stroke="#c7c7c7" stroke-width="1.6"/><path d="M1 11V14H13V11" fill="none" stroke="#c7c7c7" stroke-width="1.5"/></svg><svg class="r" style="left:1588px;top:39px" width="14" height="15" viewBox="0 0 14 15"><path d="M7 1V11M3 7L7 11L11 7" fill="none" stroke="#c7c7c7" stroke-width="1.6"/><path d="M1 11V14H13V11" fill="none" stroke="#c7c7c7" stroke-width="1.5"/></svg><div class="r" style="left:1843px;top:40px;width:1px;height:15px;background:#4a4a4a"></div><svg class="r" style="left:1854px;top:39px" width="16" height="16" viewBox="0 0 16 16"><g transform="translate(8,8)"><path d="M-1.3 -7H1.3L1.8 -5Q2.8 -4.6 3.6 -4L5.5 -4.8L6.8 -2.6L5.2 -1.3Q5.4 0 5.2 1.3L6.8 2.6L5.5 4.8L3.6 4Q2.8 4.6 1.8 5L1.3 7H-1.3L-1.8 5Q-2.8 4.6 -3.6 4L-5.5 4.8L-6.8 2.6L-5.2 1.3Q-5.4 0 -5.2 -1.3L-6.8 -2.6L-5.5 -4.8L-3.6 -4Q-2.8 -4.6 -1.8 -5Z" fill="none" stroke="#c7c7c7" stroke-width="1.3" stroke-linejoin="round"/><circle r="2" fill="#c7c7c7"/></g></svg><div class="r" style="left:1153px;top:61px;width:1px;height:80px;background:#4a4a4a"></div><div class="r" style="left:1235px;top:61px;width:1px;height:80px;background:#4a4a4a"></div><div class="r" style="left:1317px;top:61px;width:1px;height:80px;background:#4a4a4a"></div><div class="r" style="left:1399px;top:61px;width:1px;height:80px;background:#4a4a4a"></div><div class="r" style="left:1481px;top:61px;width:1px;height:80px;background:#4a4a4a"></div><div class="r" style="left:1563px;top:61px;width:1px;height:80px;background:#4a4a4a"></div><div class="r" style="left:1645px;top:61px;width:1px;height:80px;background:#4a4a4a"></div><div class="r" style="left:1727px;top:61px;width:1px;height:80px;background:#4a4a4a"></div><div class="r" style="left:1809px;top:61px;width:1px;height:80px;background:#4a4a4a"></div><div class="t" style="right:738px;top:66.53px;font-size:10px;color:#e6e6e6;font-weight:400;">200 ms</div><div class="t" style="right:656px;top:66.53px;font-size:10px;color:#e6e6e6;font-weight:400;">400 ms</div><div class="t" style="right:574px;top:66.53px;font-size:10px;color:#e6e6e6;font-weight:400;">600 ms</div><div class="t" style="right:492px;top:66.53px;font-size:10px;color:#e6e6e6;font-weight:400;">800 ms</div><div class="t" style="right:410px;top:66.53px;font-size:10px;color:#e6e6e6;font-weight:400;">1000 ms</div><div class="t" style="right:328px;top:66.53px;font-size:10px;color:#e6e6e6;font-weight:400;">1200 ms</div><div class="t" style="right:246px;top:66.53px;font-size:10px;color:#e6e6e6;font-weight:400;">1400 ms</div><div class="t" style="right:164px;top:66.53px;font-size:10px;color:#e6e6e6;font-weight:400;">1600 ms</div><div class="t" style="right:82px;top:66.53px;font-size:10px;color:#e6e6e6;font-weight:400;">1800 ms</div><div class="t" style="right:15px;top:66.53px;font-size:10px;color:#f0f0f0;font-weight:400;">2000</div><div class="r" style="left:1071px;top:79px;width:2px;height:62px;background:#1a8ad0"></div><div class="r" style="left:1071px;top:61px;width:5px;height:18px;background:#0c4a72;border:1px solid #1a8ad0;border-left:none;border-radius:0 3px 3px 0"></div><div class="r" style="left:1072.5px;top:65px;width:1px;height:9px;background:#cfe3f5"></div><div class="r" style="left:1072px;top:84.5px;width:25.5px;height:9.5px;background:#1f4f7a"></div><div class="r" style="left:1072px;top:86.5px;width:24px;height:5px;background:#3dba5a"></div><div class="r" style="left:1360px;top:89px;width:1.5px;height:2px;background:#3dba5a"></div><div class="r" style="left:1363px;top:89px;width:1.5px;height:2px;background:#3dba5a"></div><div class="r" style="left:1878px;top:79px;width:2px;height:62px;background:#1a8ad0"></div><div class="r" style="left:1875px;top:61px;width:5px;height:18px;background:#0c4a72;border:1px solid #1a8ad0;border-right:none;border-radius:3px 0 0 3px"></div><div class="r" style="left:1877.5px;top:65px;width:1px;height:9px;background:#cfe3f5"></div><div class="t" style="left:1075.5px;top:150.34px;font-size:12px;color:#c7c7c7;font-weight:400;">Name</div><div class="r" style="left:1071px;top:168px;width:300px;height:22px;background:#454545"></div><svg class="r" style="left:1076px;top:173px" width="14" height="14" viewBox="0 0 14 14"><path d="M4 1.5Q2 1.5 2 3.5V5.5Q2 7 0.8 7Q2 7 2 8.5V10.5Q2 12.5 4 12.5M10 1.5Q12 1.5 12 3.5V5.5Q12 7 13.2 7Q12 7 12 8.5V10.5Q12 12.5 10 12.5" fill="none" stroke="#f28b54" stroke-width="1.4"/><circle cx="7" cy="4.5" r="1" fill="#f28b54"/><path d="M7 6.8V9.8" stroke="#f28b54" stroke-width="1.5"/></svg><div class="t" style="left:1094.2px;top:175.27px;font-size:11.5px;color:#e3e3e3;font-weight:400;">GetByID</div><div class="r" style="left:1371px;top:142px;width:1px;height:683px;background:#4a4a4a"></div><div class="r" style="left:1372px;top:142px;width:508px;height:27px;background:#3c3c3c;border-bottom:1px solid #4a4a4a"></div><svg class="r" style="left:1383.5px;top:149.5px" width="11" height="11" viewBox="0 0 11 11"><path d="M0.8 0.8L10.2 10.2M10.2 0.8L0.8 10.2" stroke="#c7c7c7" stroke-width="1.4"/></svg><div class="t" style="left:1411.6px;top:149.84px;font-size:12px;color:#c7c7c7;font-weight:400;">Headers</div><div class="t" style="left:1474.5px;top:149.84px;font-size:12px;color:#c7c7c7;font-weight:400;">Payload</div><div class="t" style="left:1535.5px;top:149.84px;font-size:12px;color:#7cacf8;font-weight:400;">Preview</div><div class="t" style="left:1595.4px;top:149.84px;font-size:12px;color:#c7c7c7;font-weight:400;">Response</div><div class="t" style="left:1665.4px;top:149.84px;font-size:12px;color:#c7c7c7;font-weight:400;">Initiator</div><div class="t" style="left:1726.5px;top:149.84px;font-size:12px;color:#c7c7c7;font-weight:400;">Timing</div><div class="r" style="left:1526px;top:166px;width:60px;height:2px;background:#7cacf8"></div><div class="r" style="left:1372px;top:169px;width:508px;height:656px;overflow:hidden"><svg class="r" style="left:10px;top:9.0px" width="8" height="7"><path d="M0 0H8L4 7Z" fill="#c4c4c4"/></svg><div class="tm" style="left:23px;top:9.07px;font-size:11px;color:#e3e3e3">{returnObj: {,…}}</div><svg class="r" style="left:21px;top:25.0px" width="8" height="7"><path d="M0 0H8L4 7Z" fill="#c4c4c4"/></svg><div class="tm" style="left:34px;top:25.07px;font-size:11px;color:#e3e3e3"><span style="color:#7cacf8">returnObj</span>: {,…}</div><div class="tm" style="left:46px;top:41.07px;font-size:11px;color:#e3e3e3"><span style="color:#7cacf8">ExtensionTables</span>: []</div><div class="tm" style="left:46px;top:57.07px;font-size:11px;color:#e3e3e3"><span style="color:#7cacf8">HedTaxSum</span>: []</div><div class="tm" style="left:46px;top:73.07px;font-size:11px;color:#e3e3e3"><span style="color:#7cacf8">OHOrderMsc</span>: []</div><svg class="r" style="left:34.5px;top:88.5px" width="7" height="8"><path d="M0 0L7 4L0 8Z" fill="#c4c4c4"/></svg><div class="tm" style="left:46px;top:89.07px;font-size:11px;color:#e3e3e3"><span style="color:#7cacf8">OrderDtl</span>: [,…]</div><div class="tm" style="left:46px;top:105.07px;font-size:11px;color:#e3e3e3"><span style="color:#7cacf8">OrderDtlAttch</span>: []</div><div class="tm" style="left:46px;top:121.07px;font-size:11px;color:#e3e3e3"><span style="color:#7cacf8">OrderDtlEDIAck</span>: []</div><svg class="r" style="left:34.5px;top:136.5px" width="7" height="8"><path d="M0 0L7 4L0 8Z" fill="#c4c4c4"/></svg><div class="tm" style="left:46px;top:137.07px;font-size:11px;color:#e3e3e3"><span style="color:#7cacf8">OrderHed</span>: [{OpenOrder: true, VoidOrder: false, Company: "EPIC06", OrderNum: 5489</div><div class="tm" style="left:46px;top:153.07px;font-size:11px;color:#e3e3e3"><span style="color:#7cacf8">OrderHedAttch</span>: []</div><div class="tm" style="left:46px;top:169.07px;font-size:11px;color:#e3e3e3"><span style="color:#7cacf8">OrderHedUPS</span>: []</div><div class="tm" style="left:46px;top:185.07px;font-size:11px;color:#e3e3e3"><span style="color:#7cacf8">OrderHist</span>: []</div><div class="tm" style="left:46px;top:201.07px;font-size:11px;color:#e3e3e3"><span style="color:#7cacf8">OrderMsc</span>: []</div><svg class="r" style="left:34.5px;top:216.5px" width="7" height="8"><path d="M0 0L7 4L0 8Z" fill="#c4c4c4"/></svg><div class="tm" style="left:46px;top:217.07px;font-size:11px;color:#e3e3e3"><span style="color:#7cacf8">OrderRel</span>: [{Company: "EPIC06", OrderNum: 5489, OrderLine: 1, OrderRelNum: 1</div><div class="tm" style="left:46px;top:233.07px;font-size:11px;color:#e3e3e3"><span style="color:#7cacf8">OrderRelTax</span>: []</div><svg class="r" style="left:34.5px;top:248.5px" width="7" height="8"><path d="M0 0L7 4L0 8Z" fill="#c4c4c4"/></svg><div class="tm" style="left:46px;top:249.07px;font-size:11px;color:#e3e3e3"><span style="color:#7cacf8">OrderRepComm</span>: [{Company: "EPIC06", OrderNum: 5489, SalesRepCode: "LANE"</div><svg class="r" style="left:34.5px;top:264.5px" width="7" height="8"><path d="M0 0L7 4L0 8Z" fill="#c4c4c4"/></svg><div class="tm" style="left:46px;top:265.07px;font-size:11px;color:#e3e3e3"><span style="color:#7cacf8">OrderSched</span>: [{Company: "EPIC06", OrderNum: 5489, PaySeq: 1, PayDays: 0</div><div class="tm" style="left:46px;top:281.07px;font-size:11px;color:#e3e3e3"><span style="color:#7cacf8">PartSubs</span>: []</div><div class="tm" style="left:46px;top:297.07px;font-size:11px;color:#e3e3e3"><span style="color:#7cacf8">SNFormat</span>: []</div><div class="tm" style="left:46px;top:313.07px;font-size:11px;color:#e3e3e3"><span style="color:#7cacf8">SelectedSerialNumbers</span>: []</div><svg class="r" style="left:34.5px;top:328.5px" width="7" height="8"><path d="M0 0L7 4L0 8Z" fill="#c4c4c4"/></svg><div class="tm" style="left:46px;top:329.07px;font-size:11px;color:#e3e3e3"><span style="color:#7cacf8">TaxConnectStatus</span>: [{Company: "EPIC06", ETCOffline: false, ErrorMessage: ""</div></div>
</body></html>
